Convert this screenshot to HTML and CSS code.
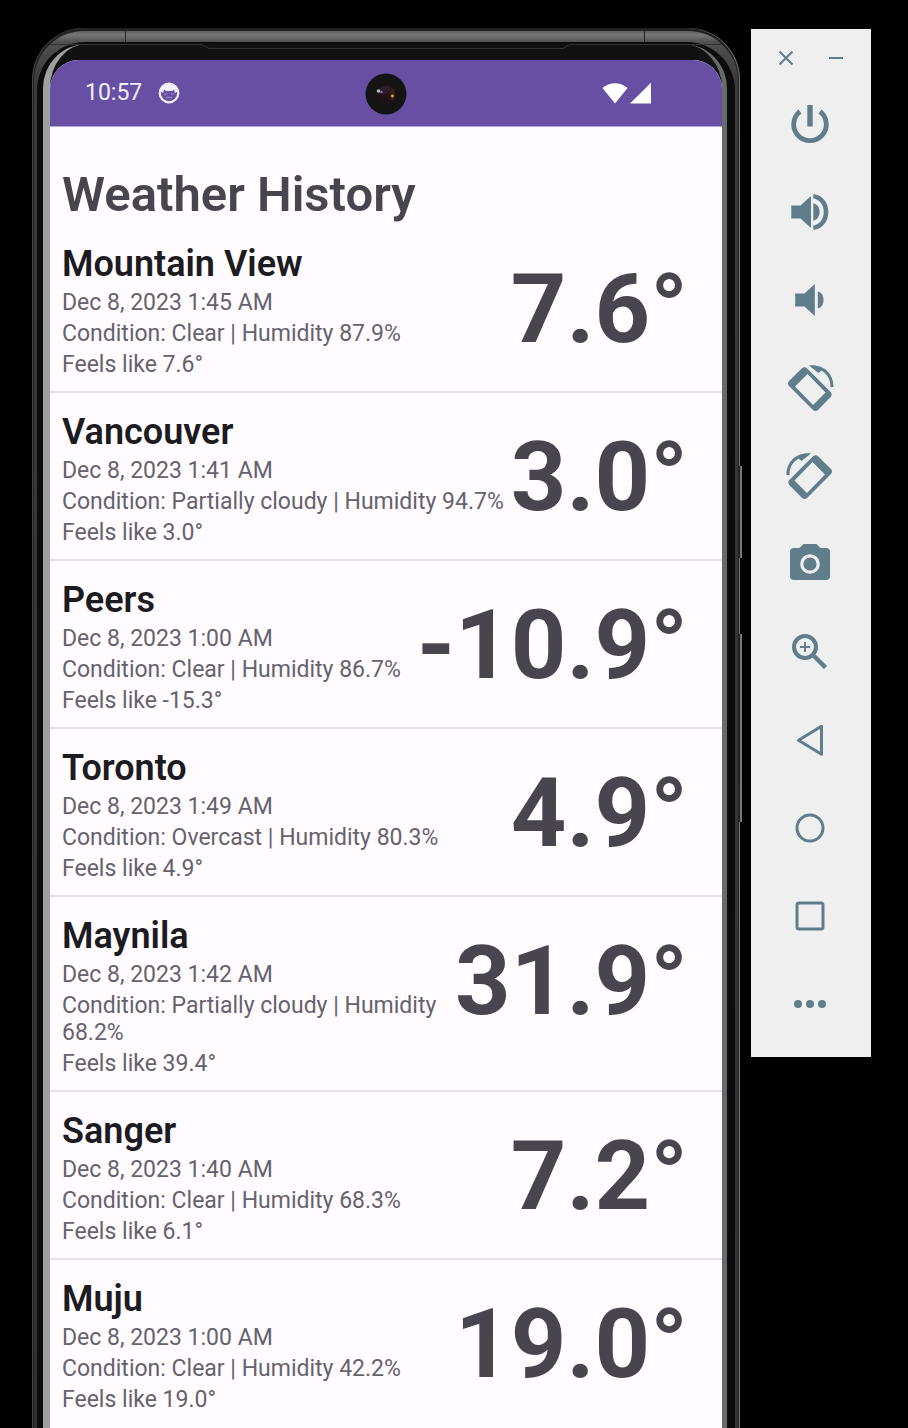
FILE: index.html
```
<!DOCTYPE html>
<html lang="en">
<head>
<meta charset="utf-8">
<meta name="viewport" content="width=device-width, initial-scale=1">
<title>Weather History</title>
<link rel="stylesheet" href="styles.css">
</head>
<body>
<main class="phone">
  <span class="side-button side-button-power"></span>
  <span class="side-button side-button-volume"></span>
  <div class="rail">
    <div class="bezel">
      <div class="glass">
        <div class="earpiece">
          <span class="earpiece-line"></span>
          <svg width="370" height="16" viewBox="0 0 370 16" fill="none" stroke="#333" aria-hidden="true"><path d="M0 .5h1l7 4h354l7-4h1"/></svg>
          <span class="earpiece-line"></span>
        </div>
        <div class="screen">
          <header class="status">
            <span class="clock">10:57</span>
            <svg width="22" height="22" viewBox="0 0 22 22" aria-hidden="true"><circle cx="11" cy="11" r="9.3" fill="none" stroke="#f3effa" stroke-width="2.2"/><path d="M2 9C3 4 6 1.500 11 1.500S19 4 20 9l-3 2-1-3.500-2 1.500H8L6 7.500 5 11z" fill="#f3effa"/><path d="M6.500 12h2.500M13 12h2.500M8 15q3 1.500 6 0" fill="none" stroke="#a394cb" stroke-width="1.200"/></svg>
            <svg class="signal" width="50" height="22" viewBox="0 0 50 22" fill="#fff" aria-hidden="true"><path d="M.5 6C7-.5 19-.5 25.500 6L13 21.500zM49 .800V21.500H28z"/></svg>
            <svg class="lens" width="42" height="42" viewBox="0 0 42 42" aria-hidden="true"><circle cx="21" cy="21" r="20.500" fill="#141414"/><circle cx="21" cy="21" r="10" fill="#1d1213"/><path d="M13 17c3-5 10-6 14-2l-5 6-6 1z" fill="#2b1d2c"/><path d="M27 14c4 4 4 10 0 14l-3-6z" fill="#38200c"/><circle cx="13.500" cy="18" r="1.800" fill="#a9c2b8"/><circle cx="16.500" cy="19" r="1.200" fill="#94719b"/><circle cx="27.500" cy="23" r="1.400" fill="#e2a044"/></svg>
          </header>
          <h1 class="title">Weather History</h1>
          <ul class="list">
            <li class="row"><div class="info"><h2 class="city">Mountain View</h2><p class="line">Dec 8, 2023 1:45 AM</p><p class="line">Condition: Clear | Humidity 87.9%</p><p class="line">Feels like 7.6°</p></div><span class="temp">7.6°</span></li>
            <li class="row"><div class="info"><h2 class="city">Vancouver</h2><p class="line">Dec 8, 2023 1:41 AM</p><p class="line">Condition: Partially cloudy | Humidity 94.7%</p><p class="line">Feels like 3.0°</p></div><span class="temp">3.0°</span></li>
            <li class="row"><div class="info"><h2 class="city">Peers</h2><p class="line">Dec 8, 2023 1:00 AM</p><p class="line">Condition: Clear | Humidity 86.7%</p><p class="line">Feels like -15.3°</p></div><span class="temp">-10.9°</span></li>
            <li class="row"><div class="info"><h2 class="city">Toronto</h2><p class="line">Dec 8, 2023 1:49 AM</p><p class="line">Condition: Overcast | Humidity 80.3%</p><p class="line">Feels like 4.9°</p></div><span class="temp">4.9°</span></li>
            <li class="row"><div class="info"><h2 class="city">Maynila</h2><p class="line">Dec 8, 2023 1:42 AM</p><p class="line">Condition: Partially cloudy | Humidity 68.2%</p><p class="line">Feels like 39.4°</p></div><span class="temp">31.9°</span></li>
            <li class="row"><div class="info"><h2 class="city">Sanger</h2><p class="line">Dec 8, 2023 1:40 AM</p><p class="line">Condition: Clear | Humidity 68.3%</p><p class="line">Feels like 6.1°</p></div><span class="temp">7.2°</span></li>
            <li class="row"><div class="info"><h2 class="city">Muju</h2><p class="line">Dec 8, 2023 1:00 AM</p><p class="line">Condition: Clear | Humidity 42.2%</p><p class="line">Feels like 19.0°</p></div><span class="temp">19.0°</span></li>
          </ul>
        </div>
      </div>
    </div>
  </div>
</main>
<aside class="toolbar" aria-label="Emulator controls">
  <div class="window-buttons">
    <button class="small" aria-label="Close"><svg width="16" height="16" viewBox="0 0 16 16"><path class="stroke" d="M1.500 1.500l13 13M14.500 1.500l-13 13"/></svg></button>
    <button class="small" aria-label="Minimize"><svg width="16" height="16" viewBox="0 0 16 16"><path class="stroke" d="M1 8h14"/></svg></button>
  </div>
  <button class="tool" aria-label="Power"><svg width="48" height="48" viewBox="0 0 48 48"><path d="M21.300 5h5.400v21.500h-5.400z"/><path fill="none" stroke="#607d8b" stroke-width="4.800" d="M14 11.500a16.300 16.300 0 1 0 20 0"/></svg></button>
  <button class="tool" aria-label="Volume up"><svg width="48" height="48" viewBox="0 0 48 48"><path d="M5.300 17.500H14.500L25 8V40L14.500 30.500H5.300zM27.300 15.500c8.500 1 8.500 16 0 17zM27.300 6c20 2 20 34 0 36v-4.500c14-2 14-25 0-27z"/></svg></button>
  <button class="tool" aria-label="Volume down"><svg width="48" height="48" viewBox="0 0 48 48"><path d="M9.200 17.500h9.300L28.800 8v32L18.500 30.500H9.200zM31.800 15.500c7.700 1.500 7.700 15.500 0 17z"/></svg></button>
  <button class="tool" aria-label="Rotate left"><svg width="48" height="48" viewBox="0 0 48 48"><path fill-rule="evenodd" d="M16 4.200q2.500-2 5 0L44.700 28q2 2.500 0 5L32 46q-2.500 2-5 0L3 22q-2-2.500 0-5zM21.500 10L9 22.500 27 41 39.500 28.500z"/><path d="M23 1.500C37 0 47.500 9 47.500 23h-3c0-8-3.500-13-9-16.500l-3 2.500z"/></svg></button>
  <button class="tool" aria-label="Rotate right"><svg width="48" height="48" viewBox="0 0 48 48"><g transform="translate(48 0) scale(-1 1)"><path fill-rule="evenodd" d="M16 4.200q2.500-2 5 0L44.700 28q2 2.500 0 5L32 46q-2.500 2-5 0L3 22q-2-2.500 0-5zM21.500 10L9 22.500 27 41 39.500 28.500z"/><path d="M23 1.500C37 0 47.500 9 47.500 23h-3c0-8-3.500-13-9-16.500l-3 2.500z"/></g></svg></button>
  <button class="tool" aria-label="Take screenshot"><svg width="48" height="48" viewBox="0 0 48 48"><path d="M17.500 4h13l4 4H40q4 0 4 4v24q0 4-4 4H8q-4 0-4-4V12q0-4 4-4h5.500z"/><circle cx="24" cy="24" r="8.200" fill="none" stroke="#efefef" stroke-width="3.200"/></svg></button>
  <button class="tool" aria-label="Zoom"><svg width="48" height="48" viewBox="0 0 48 48"><g fill="none" stroke="#607d8b"><circle cx="19" cy="19" r="11" stroke-width="4"/><path stroke-width="2" d="M14 19h10M19 14v10"/><path stroke-width="4.500" d="M28 28l11.500 11.500"/></g></svg></button>
  <button class="tool" aria-label="Back"><svg width="48" height="48" viewBox="0 0 48 48"><path class="stroke" stroke-width="3" stroke-linejoin="round" d="M35.500 10.300v28L12.500 24.300z"/></svg></button>
  <button class="tool" aria-label="Home"><svg width="48" height="48" viewBox="0 0 48 48"><circle class="stroke" cx="24" cy="24" r="13"/></svg></button>
  <button class="tool" aria-label="Overview"><svg width="48" height="48" viewBox="0 0 48 48"><rect class="stroke" x="11" y="11" width="26" height="26" rx="2"/></svg></button>
  <button class="tool" aria-label="More"><svg width="48" height="48" viewBox="0 0 48 48"><circle cx="12" cy="24" r="4"/><circle cx="24" cy="24" r="4"/><circle cx="36" cy="24" r="4"/></svg></button>
</aside>
</body>
</html>
```
FILE: styles.css
```
* {
  box-sizing: border-box;
}

body {
  margin: 0;
  min-height: 100vh;
  padding: 28px 37px 0 32px;
  display: flex;
  gap: 11px;
  background: #000;
  font-family: Roboto, "Liberation Sans", sans-serif;
}

h1, h2, p, ul {
  margin: 0;
  padding: 0;
}

/* Device frame */
.phone {
  position: relative;
  flex: 1;
  min-width: 0;
  display: flex;
  padding: 3px 2px 0;
  border-radius: 52px 52px 0 0;
  background: #222;
  box-shadow: inset 1px 0 #444, inset -1px 0 #777;
}

.side-button {
  position: absolute;
  right: -2px;
  width: 4px;
  border-right: 2px solid #777;
  background: #222;
}

.side-button-power {
  top: 438px;
  height: 92px;
}

.side-button-volume {
  top: 606px;
  height: 188px;
}

.rail {
  position: relative;
  flex: 1;
  display: flex;
  min-width: 0;
  padding: 11px 3px 0;
  border-radius: 50px 50px 0 0;
  background: linear-gradient(#606060, #777 4px, #505050 11px, #3a3a3a 50px, #333);
}

.rail::before,
.rail::after {
  content: "";
  position: absolute;
  top: 0;
  width: 1px;
  height: 11px;
  background: #222;
}

.rail::before {
  left: 91px;
}

.rail::after {
  right: 93px;
}

.bezel {
  flex: 1;
  display: flex;
  min-width: 0;
  padding: 2px 8px 0 6px;
  border-radius: 48px 48px 0 0;
  background: #0c0c0c;
}

.glass {
  flex: 1;
  display: flex;
  flex-direction: column;
  min-width: 0;
  border: solid #a0a0a0;
  border-width: 0 5px 0 7px;
  border-right-color: #686b6b;
  border-radius: 44px 44px 0 0;
  background: #111;
}

.earpiece {
  display: flex;
}

.earpiece-line {
  flex: 1;
  border-top: 1px solid #333;
}

.screen {
  flex: 1;
  border-radius: 29px 29px 0 0;
  background: #fffbff;
}

/* Status bar */
.status {
  position: relative;
  display: flex;
  align-items: center;
  gap: 16px;
  height: 67px;
  padding: 0 70px 0 35px;
  border-bottom: 1px solid #b6a6d3;
  border-radius: 29px 29px 0 0;
  background: #6750a4;
}

.clock {
  color: #f3effa;
  font-size: 23px;
  line-height: 28px;
}

.signal {
  margin-left: auto;
}

.lens {
  position: absolute;
  top: 13px;
  left: calc(50% - 21px);
}

/* Weather list */
.title {
  padding: 40px 12px 2px;
  color: #49454f;
  font-size: 49px;
  font-weight: 600;
  line-height: 56px;
}

.list {
  list-style: none;
}

.row {
  display: flex;
  justify-content: space-between;
  padding: 19px 34px 13px 12px;
  border-bottom: 2px solid #e7e0e8;
}

.row:last-child {
  border-bottom: 0;
}

.info {
  display: flex;
  flex-direction: column;
  gap: 4px;
  min-width: 0;
}

.city {
  color: #1c1b1f;
  font-size: 36px;
  font-weight: 600;
  line-height: 41px;
}

.line {
  color: #66626c;
  font-size: 23px;
  line-height: 27px;
}

.temp {
  flex: none;
  color: #49454f;
  font-size: 97px;
  font-weight: 700;
  line-height: 130px;
}

/* Emulator toolbar */
.toolbar {
  flex: none;
  align-self: flex-start;
  display: flex;
  flex-direction: column;
  width: 120px;
  margin-top: 1px;
  padding-bottom: 9px;
  background: #efefef;
}

.window-buttons {
  display: flex;
  gap: 34px;
  height: 51px;
  padding: 21px 0 14px 27px;
}

.small,
.tool {
  display: flex;
  align-items: center;
  justify-content: center;
  padding: 0;
  border: 0;
  background: none;
  cursor: pointer;
}

.tool {
  height: 88px;
  padding-right: 2px;
}

.small svg,
.tool svg {
  fill: #607d8b;
}

.toolbar .stroke {
  fill: none;
  stroke: #607d8b;
  stroke-width: 3px;
}

.toolbar .small .stroke {
  stroke-width: 2px;
}
```
